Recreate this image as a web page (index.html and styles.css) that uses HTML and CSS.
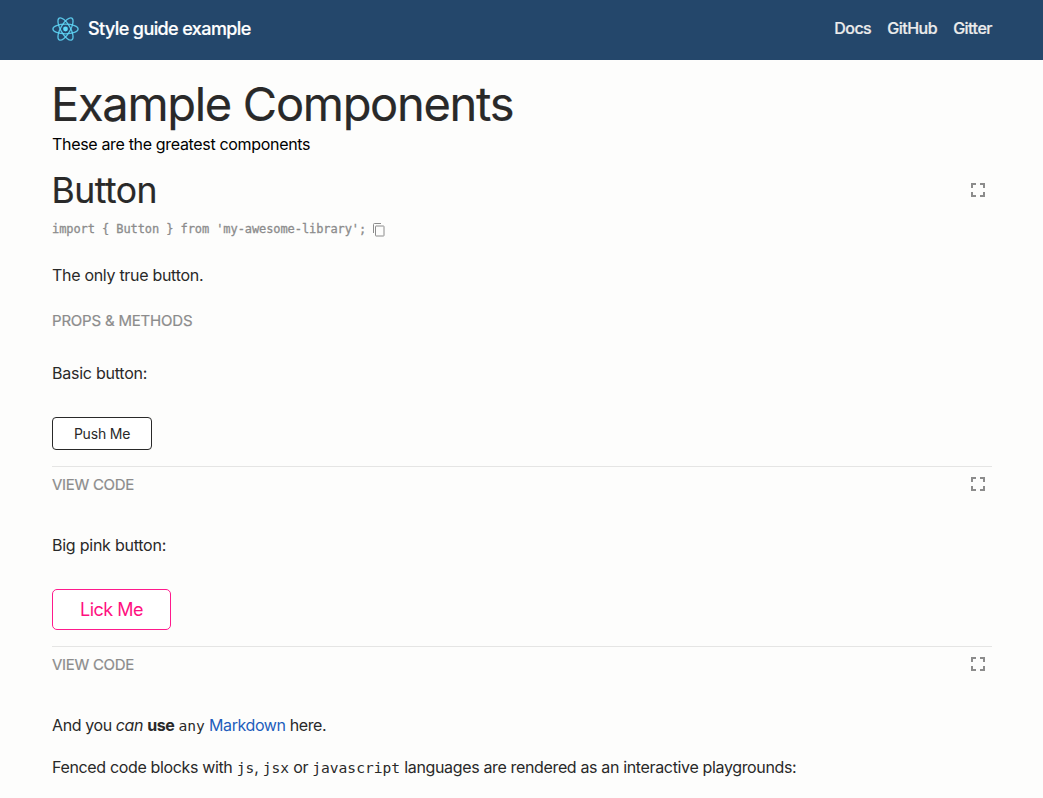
FILE: index.html
```html
<!DOCTYPE html>
<html lang="en">
<head>
<meta charset="utf-8">
<title>Style guide example</title>
<link rel="stylesheet" href="styles.css">
</head>
<body>
<header class="header">
  <div class="brand">
    <svg class="logo" width="28" height="26" viewBox="0 0 28 26" fill="none" stroke="#61dafb" stroke-opacity=".85" stroke-width="1.3">
      <circle cx="14.5" cy="13" r="2.4" fill="#61dafb" stroke="none"/>
      <ellipse cx="14.5" cy="13" rx="12.6" ry="4.8"/>
      <ellipse cx="14.5" cy="13" rx="12.6" ry="4.8" transform="rotate(60 14.5 13)"/>
      <ellipse cx="14.5" cy="13" rx="12.6" ry="4.8" transform="rotate(120 14.5 13)"/>
    </svg>
    <span class="brand-name">Style guide example</span>
  </div>
  <nav class="nav"><a>Docs</a><a>GitHub</a><a>Gitter</a></nav>
</header>
<main class="content">
  <h1 class="title">Example Components</h1>
  <p class="subtitle">These are the greatest components</p>
  <div class="heading-row">
    <h2 class="component-name">Button</h2>
    <svg class="expand" width="14" height="14" viewBox="0 0 14 14"><path d="M0 0h5v2H2v3H0zM9 0h5v5h-2V2H9zM0 9h2v3h3v2H0zM12 9h2v5H9v-2h3z"/></svg>
  </div>
  <div class="import-row">
    <code class="import">import { Button } from 'my-awesome-library';</code>
    <svg class="copy" width="12" height="14" viewBox="0 0 12 14" fill="none" stroke="#8c8c8c"><path d="M.5 10V1.5q0-1 1-1H8"/><rect x="2.5" y="3" width="8.5" height="10" rx=".5"/></svg>
  </div>
  <p class="text description">The only true button.</p>
  <div class="tab props">PROPS &amp; METHODS</div>
  <p class="text basic">Basic button:</p>
  <div class="preview"><button class="button">Push Me</button></div>
  <div class="toolbar">
    <span class="tab">VIEW CODE</span>
    <svg class="expand" width="14" height="14" viewBox="0 0 14 14"><path d="M0 0h5v2H2v3H0zM9 0h5v5h-2V2H9zM0 9h2v3h3v2H0zM12 9h2v5H9v-2h3z"/></svg>
  </div>
  <p class="text pink-label">Big pink button:</p>
  <div class="preview"><button class="button button-pink">Lick Me</button></div>
  <div class="toolbar">
    <span class="tab">VIEW CODE</span>
    <svg class="expand" width="14" height="14" viewBox="0 0 14 14"><path d="M0 0h5v2H2v3H0zM9 0h5v5h-2V2H9zM0 9h2v3h3v2H0zM12 9h2v5H9v-2h3z"/></svg>
  </div>
  <p class="text markdown">And you <em>can</em> <strong>use</strong> <code>any</code> <a class="link">Markdown</a> here.</p>
  <p class="text fenced">Fenced code blocks with <code>js</code>, <code>jsx</code> or <code>javascript</code> languages are rendered as an interactive playgrounds:</p>
</main>
</body>
</html>
```
FILE: styles.css
```css
* { box-sizing: border-box; }
html { overflow: hidden; }
body { margin: 0; background: #fdfdfc; color: #292929; font: 16px/24px Inter, sans-serif; }
h1, h2, p { margin: 0; font-weight: 400; white-space: nowrap; }
.header { height: 60px; padding: 0 51px 3px; background: #24476b; display: flex; align-items: center; justify-content: space-between; }
.brand { display: flex; align-items: center; gap: 9px; }
.logo { display: block; }
.brand-name { color: #fff; font-size: 18px; font-weight: 500; letter-spacing: -0.6px; -webkit-text-stroke: 0.2px; }
.nav { display: flex; gap: 16px; padding-bottom: 1px; color: #ececec; font-weight: 500; letter-spacing: -0.5px; line-height: 22px; -webkit-text-stroke: 0.2px; }
.content { padding: 14px 51px 0 52px; }
.title { font-size: 47px; line-height: 60px; letter-spacing: -1.3px; margin-left: -1px; -webkit-text-stroke: 0.2px; }
.subtitle { color: #000; line-height: 20px; letter-spacing: -0.33px; }
.heading-row { display: flex; align-items: center; justify-content: space-between; height: 44px; margin-top: 15px; }
.heading-row .expand { margin-bottom: 2px; }
.component-name { font-size: 35.5px; line-height: 44px; letter-spacing: -0.5px; margin-left: -0.5px; -webkit-text-stroke: 0.2px; }
.expand { display: block; margin: 0 7px 1px 0; fill: #8c8c8c; }
.import-row { display: flex; align-items: center; gap: 7px; height: 20px; margin-top: 6px; }
.import { color: #8c8c8c; font: 12px/20px "DejaVu Sans Mono", monospace; letter-spacing: -0.085px; -webkit-text-stroke: 0.3px; }
.copy { margin-top: 2px; }
.text { letter-spacing: -0.3px; }
.description { margin-top: 24px; }
.tab { color: #8c8c8c; font-size: 15px; letter-spacing: -0.3px; -webkit-text-stroke: 0.2px; }
.props { margin-top: 22px; letter-spacing: -0.2px; }
.basic { margin-top: 28px; letter-spacing: -0.24px; }
.preview { display: flex; padding: 32px 0 16px; }
.button { width: 100px; height: 33px; padding: 0; border: 1px solid #292929; border-radius: 4px; background: #fff; color: #292929; font: 14px/20px Inter, sans-serif; letter-spacing: -0.2px; }
.button-pink { width: 119px; height: 41px; border-color: #ff1a8c; border-radius: 5px; color: #ff1080; font-size: 18px; letter-spacing: -0.5px; }
.toolbar { display: flex; align-items: center; justify-content: space-between; height: 36px; border-top: 1px solid #e5e5e4; }
.pink-label { margin-top: 31px; letter-spacing: -0.24px; }
.markdown { margin-top: 31px; letter-spacing: -0.4px; }
.fenced { margin-top: 18px; letter-spacing: -0.35px; }
.text code { font: 14.6px/20px "DejaVu Sans Mono", monospace; letter-spacing: 0; }
.link { color: #1d5ebc; }
```
